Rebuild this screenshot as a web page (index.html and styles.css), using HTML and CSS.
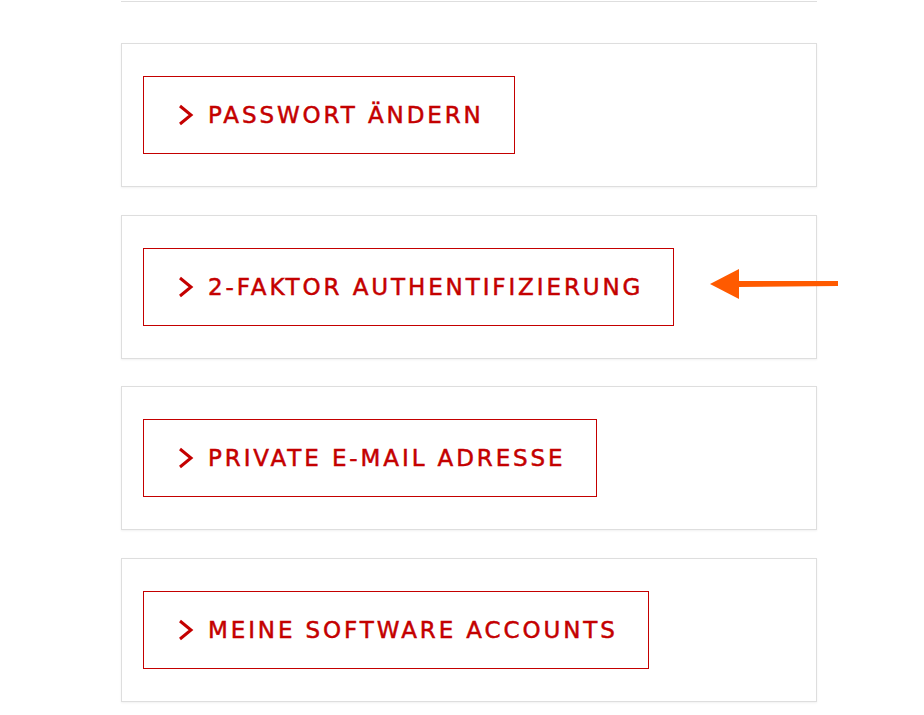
FILE: index.html
```html
<!DOCTYPE html>
<html lang="de">
<head>
<meta charset="utf-8">
<title>Konto</title>
<link rel="stylesheet" href="styles.css">
</head>
<body>
<main class="page">
  <div class="stub"></div>
  <section class="card">
    <a class="btn" href="#"><svg class="chev" viewBox="0 0 16 22"><path d="M2 2 L13 11 L2 20" /></svg><span>PASSWORT ÄNDERN</span></a>
  </section>
  <section class="card">
    <a class="btn" href="#"><svg class="chev" viewBox="0 0 16 22"><path d="M2 2 L13 11 L2 20" /></svg><span>2-FAKTOR AUTHENTIFIZIERUNG</span></a>
    <svg class="pointer" viewBox="0 0 130 30"><polygon points="0,15 29,0 29,30" /><polygon points="28,12 128,12 128,17 28,18" /></svg>
  </section>
  <section class="card">
    <a class="btn" href="#"><svg class="chev" viewBox="0 0 16 22"><path d="M2 2 L13 11 L2 20" /></svg><span>PRIVATE E-MAIL ADRESSE</span></a>
  </section>
  <section class="card">
    <a class="btn" href="#"><svg class="chev" viewBox="0 0 16 22"><path d="M2 2 L13 11 L2 20" /></svg><span>MEINE SOFTWARE ACCOUNTS</span></a>
  </section>
</main>
</body>
</html>
```
FILE: styles.css
```css
html, body {
  margin: 0;
  padding: 0;
  background: #fff;
}
.page {
  width: 696px;
  margin-left: 121px;
  display: flex;
  flex-direction: column;
}
.stub {
  height: 1px;
  border-bottom: 1px solid #dedede;
  margin-bottom: 41px;
}
.card {
  position: relative;
  box-sizing: border-box;
  height: 144px;
  border: 1px solid #dedede;
  box-shadow: 0 1px 2px rgba(0, 0, 0, 0.06);
  padding: 32px 0 0 21px;
  margin-bottom: 27.67px;
  display: flex;
  align-items: flex-start;
}
.btn {
  box-sizing: border-box;
  height: 78px;
  display: inline-flex;
  align-items: center;
  border: 1px solid #c40000;
  padding: 0 30px 0 34px;
  color: #c40000;
  text-decoration: none;
  font-family: "DejaVu Sans", sans-serif;
  font-size: 23px;
  letter-spacing: 2.9px;
  -webkit-text-stroke: 0.5px #c40000;
}
.chev {
  width: 16px;
  height: 22px;
  margin-right: 14px;
  fill: none;
  stroke: #c40000;
  stroke-width: 3;
  flex: none;
}
.pointer {
  position: absolute;
  left: 588px;
  top: 53px;
  width: 130px;
  height: 30px;
  fill: #ff5a00;
}
```
